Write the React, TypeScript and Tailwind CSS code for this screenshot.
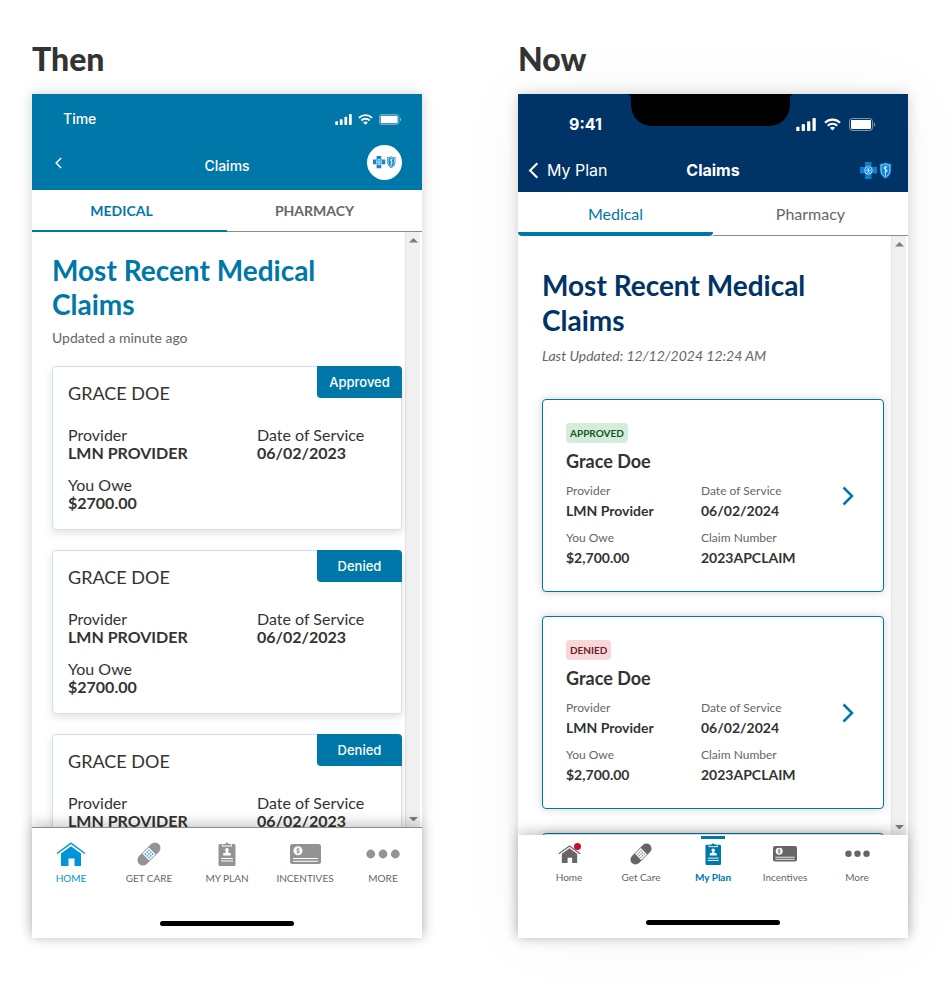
import React from 'react';

type IconProps = { className?: string };

const SignalIcon: React.FC<IconProps> = ({ className }) => (
  <svg viewBox="0 0 18 12" className={className} fill="currentColor" aria-hidden="true">
    <rect x="0" y="8" width="3" height="4" rx="0.8" />
    <rect x="5" y="5.6" width="3" height="6.4" rx="0.8" />
    <rect x="10" y="3" width="3" height="9" rx="0.8" />
    <rect x="15" y="0" width="3" height="12" rx="0.8" />
  </svg>
);

const WifiIcon: React.FC<IconProps> = ({ className }) => (
  <svg viewBox="0 0 17 12" className={className} fill="none" stroke="currentColor" strokeWidth="2.2" aria-hidden="true">
    <path d="M1 4.2C5.2 0 11.8 0 16 4.2" />
    <path d="M3.8 7.2C6.4 4.6 10.6 4.6 13.2 7.2" />
    <path d="M8.5 12l-2.6-2.700c1.500-1.300 3.700-1.300 5.200 0z" fill="currentColor" stroke="none" />
  </svg>
);

const BatteryIcon: React.FC<IconProps> = ({ className }) => (
  <svg viewBox="0 0 26 13" className={className} fill="none" aria-hidden="true">
    <rect x="0.5" y="0.5" width="23" height="12" rx="3" stroke="#fff" strokeOpacity="0.5" />
    <rect x="2" y="2" width="20" height="9" rx="1" fill="#fff" />
    <path d="M25 4.5v4c.8-.4 1-1.200 1-2s-.2-1.600-1-2z" fill="#fff" fillOpacity="0.6" />
  </svg>
);

const BrandMark: React.FC<IconProps & { fill: string; line: string }> = ({ className, fill, line }) => (
  <svg viewBox="0 0 32 17" className={className} fill="none" aria-hidden="true">
    <path d="M5 0h6.5v5H17v6.5h-5.5V17H5v-5.500H0V5h5z" fill={fill} />
    <circle cx="8.4" cy="8.4" r="3.8" stroke={line} strokeWidth="0.9" />
    <circle cx="8.4" cy="6.9" r="1" fill={line} />
    <path d="M8.4 7.5v2l-2.200 1.800M8.4 9.500l2.200 1.800M5.600 8.200l2.800.3 2.800-.3" stroke={line} strokeWidth="0.9" />
    <path d="M19.5 1.500c2 .4 4-.1 6-1.300 2 1.200 4 1.700 6 1.300-1 3.400.4 6.200-.7 9.500-.8 2.400-2.700 4.400-5.300 5.900-2.600-1.500-4.500-3.500-5.300-5.900-1.100-3.300.3-6.100-.7-9.500z" fill={fill} />
    <path d="M21 2.900c1.600.1 3-.3 4.500-1.200 1.500.9 2.900 1.300 4.500 1.200-.5 3 .4 5.200-.6 7.900-.6 1.800-2 3.200-3.900 4.400-1.900-1.200-3.300-2.600-3.900-4.400-1-2.700-.1-4.900-.6-7.900z" stroke={line} strokeWidth="0.8" />
    <path d="M25.500 3.500v10.500" stroke={line} strokeWidth="0.9" />
    <path d="M27.200 5c-3-.7-4.400.9-1.800 2.100s1.700 2.900-.9 2.600" stroke={line} strokeWidth="1.300" />
  </svg>
);

const ChevronIcon: React.FC<IconProps & { dir: 'left' | 'right' }> = ({ className, dir }) => (
  <svg viewBox="0 0 12 20" className={className} fill="none" stroke="currentColor" aria-hidden="true">
    <path d={dir === 'left' ? 'M10.5 1.500L2 10l8.500 8.500' : 'M1.500 1.500L10 10l-8.500 8.500'} strokeWidth="2.5" />
  </svg>
);

const HomeIcon: React.FC<IconProps> = ({ className }) => (
  <svg viewBox="0 0 30 24" className={className} aria-hidden="true">
    <path d="M1 11.500L15 1.200l14 10.300" fill="none" stroke="currentColor" strokeWidth="1.5" />
    <path d="M5 11.500L15 4.300l10 7.200V24h-6.500v-7.500h-6V24H5z" fill="currentColor" />
  </svg>
);

const BandageIcon: React.FC<IconProps & { dots: string }> = ({ className, dots }) => (
  <svg viewBox="0 0 24 24" className={className} aria-hidden="true">
    <g transform="rotate(-45 12 12)">
      <rect x="-2" y="6.500" width="28" height="11" rx="5.500" fill="currentColor" />
      <rect x="7.500" y="7.300" width="9" height="9.400" fill="#fff" />
      <g fill={dots}>
        <circle cx="9.500" cy="9.500" r="0.9" />
        <circle cx="12" cy="9.500" r="0.9" />
        <circle cx="14.500" cy="9.500" r="0.9" />
        <circle cx="9.500" cy="12" r="0.9" />
        <circle cx="12" cy="12" r="0.9" />
        <circle cx="14.500" cy="12" r="0.9" />
        <circle cx="9.500" cy="14.500" r="0.9" />
        <circle cx="12" cy="14.500" r="0.9" />
        <circle cx="14.500" cy="14.500" r="0.9" />
      </g>
    </g>
  </svg>
);

const PlanIcon: React.FC<IconProps> = ({ className }) => (
  <svg viewBox="0 0 18 24" className={className} aria-hidden="true">
    <rect x="0.500" y="2" width="17" height="22" rx="1.500" fill="currentColor" />
    <path d="M4 2.500h10v2H4z" fill="#fff" />
    <path d="M5 3.600V2h2.500a1.500 1.500 0 013 0H13v1.600z" fill="currentColor" />
    <circle cx="9" cy="8" r="1.900" fill="#fff" />
    <path d="M8 9h2v1.500l2.800.8v2.200H5.200v-2.200l2.800-.8z" fill="#fff" />
    <path d="M3 16.500h12M3 19h12" stroke="#fff" strokeWidth="1" />
  </svg>
);

const IncentivesIcon: React.FC<IconProps> = ({ className }) => (
  <svg viewBox="0 0 31 20" className={className} aria-hidden="true">
    <rect width="31" height="20" rx="2.500" fill="currentColor" />
    <circle cx="8" cy="6.700" r="4.500" fill="#fff" />
    <path d="M9.600 5.300c-.7-.9-3-.8-3 .4s3 .8 3 2-2.400 1.300-3.200.3M8 3.600v6.200" fill="none" stroke="currentColor" strokeWidth="0.9" />
    <path d="M3 14.500h25M3 17.200h25" stroke="#fff" strokeWidth="1.100" />
  </svg>
);

const MoreIcon: React.FC<IconProps> = ({ className }) => (
  <svg viewBox="0 0 34 10" className={className} fill="currentColor" aria-hidden="true">
    <circle cx="4.700" cy="5" r="4.400" />
    <circle cx="17" cy="5" r="4.400" />
    <circle cx="29.300" cy="5" r="4.400" />
  </svg>
);

const Scrollbar: React.FC = () => (
  <div className="mr-0.5 flex w-[15px] shrink-0 flex-col items-center justify-between border-l border-[#e4e4e4] bg-[#f0f0f0] py-1.5" aria-hidden="true">
    <svg viewBox="0 0 10 5" className="w-[9px] fill-[#7b7b7b]">
      <path d="M5 0l5 5H0z" />
    </svg>
    <svg viewBox="0 0 10 5" className="w-[9px] fill-[#7b7b7b]">
      <path d="M0 0h10L5 5z" />
    </svg>
  </div>
);

const HomeIndicator: React.FC = () => <div className="mx-auto h-[5px] w-[134px] rounded-full bg-black" />;

const oldClaims = [
  { id: 1, status: 'Approved' },
  { id: 2, status: 'Denied' },
  { id: 3, status: 'Denied' },
];

const OldClaimCard: React.FC<{ status: string }> = ({ status }) => (
  <article className="relative h-[164px] shrink-0 rounded border border-[#c9e6f0] bg-white px-[15px] pt-3.5 text-base leading-[18px] text-[#333333] shadow-[0_3px_8px_rgba(0,0,0,0.12)]">
    <span className="absolute -top-px -right-px flex h-8 w-[85px] items-center justify-center rounded-tr rounded-bl bg-[#0077a9] font-['Inter'] text-[13px] font-medium text-white">
      {status}
    </span>
    <h3 className="text-lg leading-6">GRACE DOE</h3>
    <dl className="mt-[21px] grid grid-cols-[189px_1fr] gap-y-3.5">
      <div>
        <dt>Provider</dt>
        <dd className="font-bold">LMN PROVIDER</dd>
      </div>
      <div>
        <dt>Date of Service</dt>
        <dd className="font-bold">06/02/2023</dd>
      </div>
      <div>
        <dt>You Owe</dt>
        <dd className="font-bold">$2700.00</dd>
      </div>
    </dl>
  </article>
);

const OldNavItem: React.FC<{ label: string; active?: boolean; children: React.ReactNode }> = ({ label, active, children }) => (
  <button type="button" className={`flex flex-col items-center gap-1.5 text-[10px] leading-3 ${active ? 'text-[#0095d9]' : 'text-[#666666]'}`}>
    <span className={`flex h-6 items-center ${active ? 'text-[#0095d9]' : 'text-[#939393]'}`}>{children}</span>
    {label}
  </button>
);

const OldPhone: React.FC = () => (
  <div className="flex flex-col bg-white shadow-[0_0_12px_rgba(0,0,0,0.18)]">
    <header className="h-24 bg-[#0077a9] pt-4 text-white">
      <div className="flex h-[18px] items-center justify-between pr-[21px] pl-[31px]">
        <span className="font-['Inter'] text-sm font-medium">Time</span>
        <div className="flex items-center gap-1.5">
          <SignalIcon className="h-[11px] w-[17px]" />
          <WifiIcon className="h-[11px] w-[15px]" />
          <BatteryIcon className="h-[11px] w-[22px]" />
        </div>
      </div>
      <div className="mt-[17px] grid grid-cols-[1fr_auto_1fr] items-center px-5">
        <button type="button" aria-label="Back" className="justify-self-start pl-[3px]">
          <ChevronIcon dir="left" className="h-3 w-[7px]" />
        </button>
        <h2 className="pt-1.5 font-['Inter'] text-sm font-medium">Claims</h2>
        <span className="flex size-[35px] items-center justify-center justify-self-end rounded-full bg-white">
          <BrandMark fill="#1487c4" line="#ffffff" className="w-[23px]" />
        </span>
      </div>
    </header>

    <div role="tablist" className="grid h-[42px] grid-cols-2 text-sm font-bold">
      <button type="button" role="tab" aria-selected="true" className="border-b-2 border-[#0077a9] pt-px pr-4 text-[#0077a9]">
        MEDICAL
      </button>
      <button type="button" role="tab" aria-selected="false" className="border-b border-[#8c8c8c] pr-5 text-[#666666]">
        PHARMACY
      </button>
    </div>

    <main className="flex h-[595px] overflow-hidden">
      <div className="flex min-w-0 flex-1 flex-col pt-[21px] pr-[3px] pl-5">
        <h1 className="text-[28px] leading-[34px] font-bold text-[#0077a9]">
          Most Recent Medical
          <br />
          Claims
        </h1>
        <p className="mt-[7px] text-sm text-[#666666]">Updated a minute ago</p>
        <div className="mt-[18px] flex flex-col gap-5">
          {oldClaims.map((claim) => (
            <OldClaimCard key={claim.id} status={claim.status} />
          ))}
        </div>
      </div>
      <Scrollbar />
    </main>

    <footer className="relative border-t border-[#8c8c8c] bg-white pt-3.5 pb-3 shadow-[0_-4px_12px_rgba(0,0,0,0.2)]">
      <nav className="mb-[37px] grid grid-cols-5">
        <OldNavItem label="HOME" active>
          <HomeIcon className="w-[30px]" />
        </OldNavItem>
        <OldNavItem label="GET CARE">
          <BandageIcon dots="#4aa8dc" className="w-6" />
        </OldNavItem>
        <OldNavItem label="MY PLAN">
          <PlanIcon className="h-6" />
        </OldNavItem>
        <OldNavItem label="INCENTIVES">
          <IncentivesIcon className="w-[31px]" />
        </OldNavItem>
        <OldNavItem label="MORE">
          <MoreIcon className="w-[34px]" />
        </OldNavItem>
      </nav>
      <HomeIndicator />
    </footer>
  </div>
);

const newClaims = [
  { id: 1, status: 'APPROVED', badge: 'bg-[#d4edda] text-[#155724]' },
  { id: 2, status: 'DENIED', badge: 'bg-[#f8d7da] text-[#721c24]' },
  { id: 3, status: 'DENIED', badge: 'bg-[#f8d7da] text-[#721c24]' },
];

const Field: React.FC<{ label: string; value: string }> = ({ label, value }) => (
  <div>
    <dt className="text-xs leading-5 text-[#666666]">{label}</dt>
    <dd className="text-sm leading-5 font-bold text-[#333333]">{value}</dd>
  </div>
);

const NewClaimCard: React.FC<{ status: string; badge: string }> = ({ status, badge }) => (
  <article className="flex shrink-0 items-center rounded border border-[#0077a9] bg-white py-[23px] pr-[29px] pl-[23px] shadow-[0_0_10px_rgba(0,0,0,0.18)]">
    <div className="flex-1">
      <span className={`flex h-5 w-fit items-center rounded px-1 text-[10px] font-bold ${badge}`}>{status}</span>
      <h3 className="mt-1.5 text-lg leading-6 font-bold text-[#333333]">Grace Doe</h3>
      <dl className="mt-2 grid grid-cols-[135px_1fr] gap-y-[7px]">
        <Field label="Provider" value="LMN Provider" />
        <Field label="Date of Service" value="06/02/2024" />
        <Field label="You Owe" value="$2,700.00" />
        <Field label="Claim Number" value="2023APCLAIM" />
      </dl>
    </div>
    <button type="button" aria-label="View claim" className="text-[#0077a9]">
      <ChevronIcon dir="right" className="h-5 w-3" />
    </button>
  </article>
);

const NewNavItem: React.FC<{ label: string; active?: boolean; children: React.ReactNode }> = ({ label, active, children }) => (
  <button
    type="button"
    className={`flex flex-col items-center text-[10px] leading-3 ${active ? 'font-bold text-[#0077a9]' : 'text-[#666666]'}`}
  >
    <span className={`h-[3px] w-6 ${active ? 'bg-[#0077a9]' : ''}`} />
    <span className="relative mt-1 mb-1.5 flex h-[22px] items-center">{children}</span>
    {label}
  </button>
);

const NewPhone: React.FC = () => (
  <div className="flex flex-col bg-white shadow-[0_0_12px_rgba(0,0,0,0.18),0_0_70px_rgba(0,0,0,0.04)]">
    <header className="relative h-[98px] bg-[#003366] pt-[21px] font-['Inter'] text-white">
      <svg viewBox="0 0 172 32" className="absolute top-0 left-1/2 h-8 w-[172px] -translate-x-1/2" aria-hidden="true">
        <path d="M-1 0c4 0 5 1.500 5 5v5c0 13 9 22 22 22h115c13 0 22-9 22-22V5c0-3.500 1-5 5-5z" fill="#000" />
      </svg>
      <div className="flex h-[18px] items-center justify-between pr-[33px] pl-[51px]">
        <span className="text-base font-bold">9:41</span>
        <div className="flex items-center gap-2">
          <SignalIcon className="h-[13px] w-5" />
          <WifiIcon className="h-[13px] w-[17px]" />
          <BatteryIcon className="h-[13px] w-[26px]" />
        </div>
      </div>
      <div className="mt-[25px] grid grid-cols-[1fr_auto_1fr] items-center px-2.5 text-base">
        <button type="button" className="flex items-center gap-2 justify-self-start">
          <ChevronIcon dir="left" className="h-[17px] w-[11px]" />
          My Plan
        </button>
        <h2 className="font-bold">Claims</h2>
        <span className="justify-self-end pr-1.5">
          <BrandMark fill="#0b7fd0" line="#b5e2ff" className="w-8" />
        </span>
      </div>
    </header>

    <div role="tablist" className="grid h-11 grid-cols-2 text-base">
      <button type="button" role="tab" aria-selected="true" className="rounded-b-sm border-b-4 border-[#0077a9] pt-1 text-[#0077a9]">
        Medical
      </button>
      <button type="button" role="tab" aria-selected="false" className="border-b border-[#8c8c8c] text-[#666666]">
        Pharmacy
      </button>
    </div>

    <main className="flex h-[599px] overflow-hidden">
      <div className="flex min-w-0 flex-1 flex-col pt-8 pr-[7px] pl-6">
        <h1 className="text-[28px] leading-[35px] font-bold text-[#003366]">
          Most Recent Medical
          <br />
          Claims
        </h1>
        <p className="mt-2 text-sm text-[#666666] italic">Last Updated: 12/12/2024 12:24 AM</p>
        <div className="mt-[33px] flex flex-col gap-6">
          {newClaims.map((claim) => (
            <NewClaimCard key={claim.id} status={claim.status} badge={claim.badge} />
          ))}
        </div>
      </div>
      <Scrollbar />
    </main>

    <footer className="relative bg-white pt-px pb-[13px] shadow-[0_-4px_12px_rgba(0,0,0,0.2)]">
      <nav className="mb-9 grid grid-cols-5 px-[15px] pb-px">
        <NewNavItem label="Home">
          <HomeIcon className="w-[23px]" />
          <span className="absolute top-0 right-0 size-[7px] rounded-full bg-[#c8102e]" />
        </NewNavItem>
        <NewNavItem label="Get Care">
          <BandageIcon dots="#999999" className="w-[22px]" />
        </NewNavItem>
        <NewNavItem label="My Plan" active>
          <PlanIcon className="h-[22px]" />
        </NewNavItem>
        <NewNavItem label="Incentives">
          <IncentivesIcon className="w-6" />
        </NewNavItem>
        <NewNavItem label="More">
          <MoreIcon className="w-[25px]" />
        </NewNavItem>
      </nav>
      <HomeIndicator />
    </footer>
  </div>
);

const App: React.FC = () => (
  <div className="grid min-h-screen grid-cols-2 gap-24 bg-white pt-[35px] pr-11 pb-12 pl-8 font-['Lato',sans-serif]">
    <section>
      <h2 className="mb-[11px] text-[32px] leading-[48px] font-black text-[#333333]">Then</h2>
      <OldPhone />
    </section>
    <section>
      <h2 className="mb-[11px] text-[32px] leading-[48px] font-black text-[#333333]">Now</h2>
      <NewPhone />
    </section>
  </div>
);

export default App;
